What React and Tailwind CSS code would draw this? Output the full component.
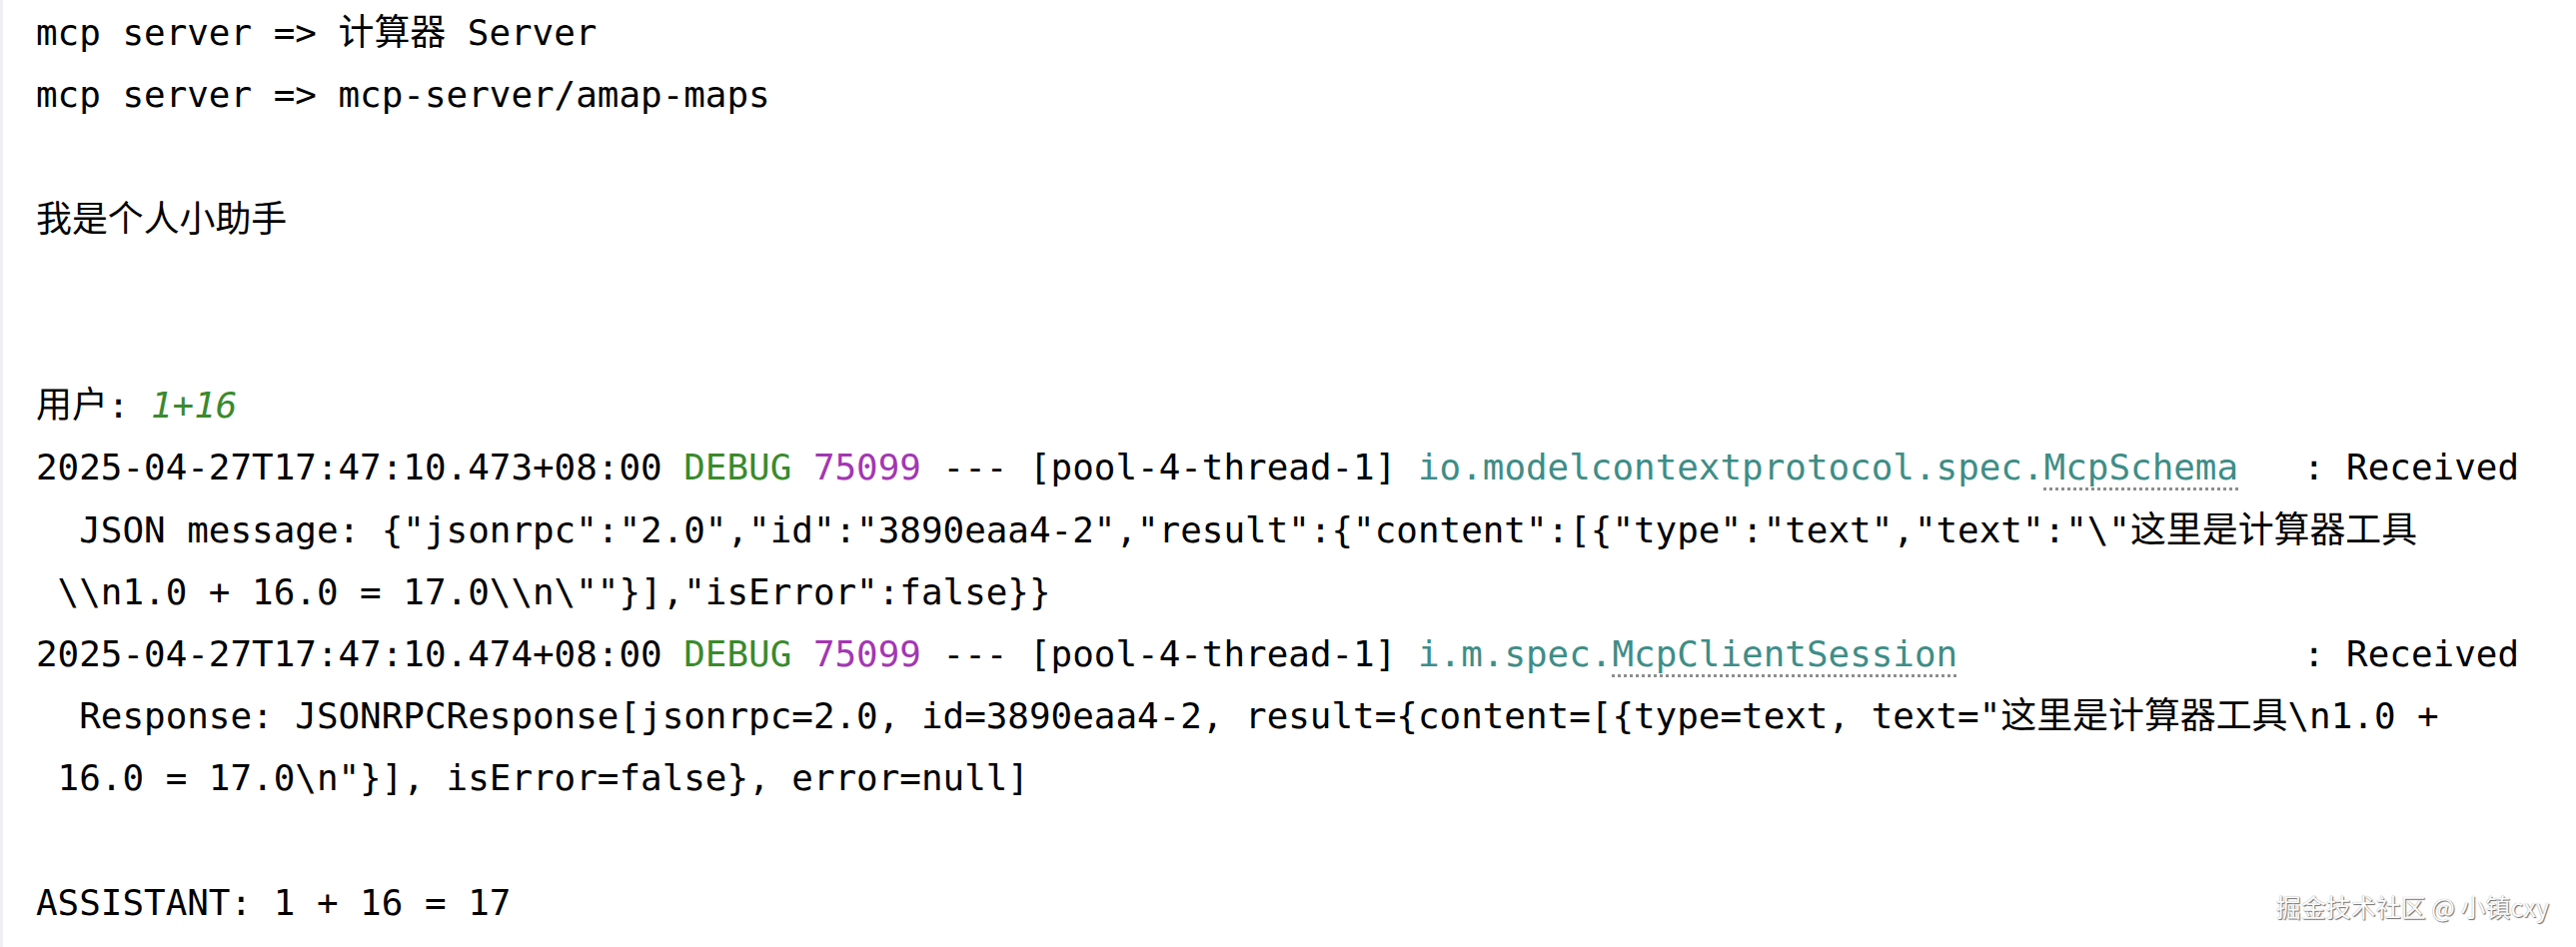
const mono = '"DejaVu Sans Mono", "Noto Sans CJK SC", monospace'

function Line({ children }) {
  return (
    <div className="h-[62.2px] leading-[62.2px] whitespace-pre overflow-visible">
      {children || '\u00a0'}
    </div>
  )
}

const Debug = () => <span className="text-[#3a8a2c]">DEBUG</span>
const Pid = () => <span className="text-[#a336b3]">75099</span>

function Logger({ pkg, cls }) {
  return (
    <span className="text-[#3e8d87]">
      {pkg}
      <span className="underline decoration-dotted decoration-[#8e8e8e] decoration-[length:3px] underline-offset-[8px]">
        {cls}
      </span>
    </span>
  )
}

export default function App() {
  return (
    <div className="relative h-[948px] w-full overflow-hidden bg-white border-l-[3px] border-[#eef0f4]">
      <div
        className="pl-[33px] pt-[2px] text-[35.9px] text-black"
        style={{ fontFamily: mono }}
      >
        <Line>mcp server =&gt; 计算器 Server</Line>
        <Line>mcp server =&gt; mcp-server/amap-maps</Line>
        <Line />
        <Line>我是个人小助手</Line>
        <Line />
        <Line />
        <Line>
          用户: <span className="italic text-[#3a8a2c]">1+16</span>
        </Line>
        <Line>
          2025-04-27T17:47:10.473+08:00 <Debug /> <Pid /> --- [pool-4-thread-1]{' '}
          <Logger pkg="io.modelcontextprotocol.spec." cls="McpSchema" />
          {'   '}: Received
        </Line>
        <Line>
          {'  JSON message: {"jsonrpc":"2.0","id":"3890eaa4-2","result":{"content":[{"type":"text","text":"\\"这里是计算器工具'}
        </Line>
        <Line>{' \\\\n1.0 + 16.0 = 17.0\\\\n\\""}],"isError":false}}'}</Line>
        <Line>
          2025-04-27T17:47:10.474+08:00 <Debug /> <Pid /> --- [pool-4-thread-1]{' '}
          <Logger pkg="i.m.spec." cls="McpClientSession" />
          {'                '}: Received
        </Line>
        <Line>
          {'  Response: JSONRPCResponse[jsonrpc=2.0, id=3890eaa4-2, result={content=[{type=text, text="这里是计算器工具\\n1.0 +'}
        </Line>
        <Line>{' 16.0 = 17.0\\n"}], isError=false}, error=null]'}</Line>
        <Line />
        <Line>ASSISTANT: 1 + 16 = 17</Line>
      </div>

      <div
        className="absolute bottom-[28px] right-[27px] text-[25px] leading-none text-[#fbfbfb] [text-shadow:1px_1px_1px_#6f6f6f,0_0_1px_#9a9a9a]"
        style={{ fontFamily: '"Noto Sans CJK SC", "Noto Sans", sans-serif' }}
      >
        掘金技术社区 @ 小镇cxy
      </div>
    </div>
  )
}
